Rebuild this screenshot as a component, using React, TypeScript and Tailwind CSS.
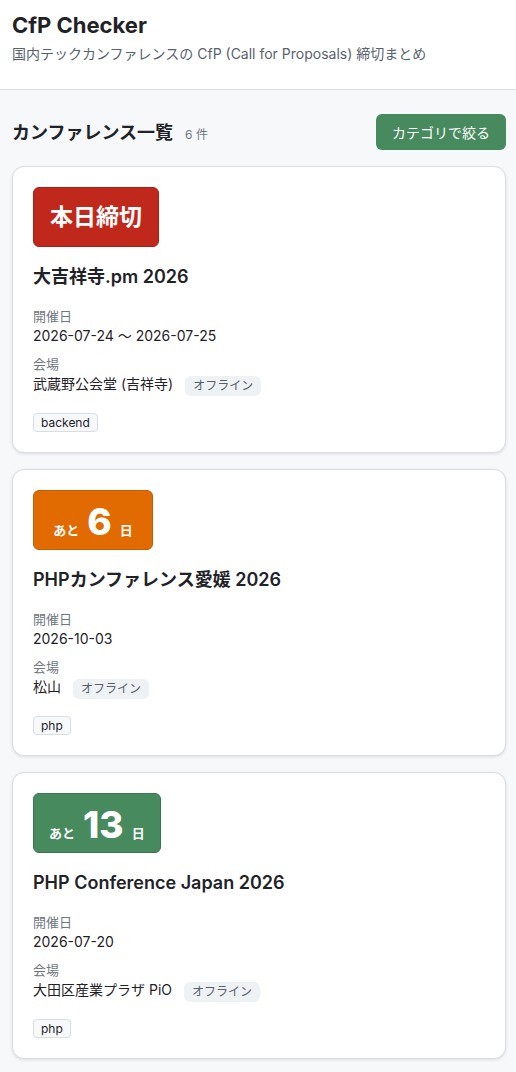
import React from 'react';

type Deadline =
  | { kind: 'today' }
  | { kind: 'days'; days: number; tone: 'orange' | 'green' };

interface Conference {
  id: string;
  name: string;
  date: string;
  venue: string;
  mode: string;
  tags: string[];
  deadline: Deadline;
}

const conferences: Conference[] = [
  {
    id: 'kichijoji',
    name: '大吉祥寺.pm 2026',
    date: '2026-07-24 〜 2026-07-25',
    venue: '武蔵野公会堂 (吉祥寺)',
    mode: 'オフライン',
    tags: ['backend'],
    deadline: { kind: 'today' },
  },
  {
    id: 'phpcon-ehime',
    name: 'PHPカンファレンス愛媛 2026',
    date: '2026-10-03',
    venue: '松山',
    mode: 'オフライン',
    tags: ['php'],
    deadline: { kind: 'days', days: 6, tone: 'orange' },
  },
  {
    id: 'phpcon-japan',
    name: 'PHP Conference Japan 2026',
    date: '2026-07-20',
    venue: '大田区産業プラザ PiO',
    mode: 'オフライン',
    tags: ['php'],
    deadline: { kind: 'days', days: 13, tone: 'green' },
  },
];

function DeadlineBadge({ deadline }: { deadline: Deadline }) {
  if (deadline.kind === 'today') {
    return (
      <div className="inline-flex h-[60px] min-w-[120px] items-center justify-center rounded-md border border-[#a52116] bg-[#c0281c] px-4 text-white">
        <span className="text-[23px] font-bold leading-none">本日締切</span>
      </div>
    );
  }

  const toneClass =
    deadline.tone === 'orange'
      ? 'bg-[#e16b00] border-[#c65e00]'
      : 'bg-[#468a5d] border-[#3a7450]';

  return (
    <div
      className={`inline-flex h-[60px] min-w-[120px] items-baseline justify-center gap-[8px] rounded-md border px-[15px] pt-[16px] text-white ${toneClass}`}
    >
      <span className="text-[13px] font-bold leading-none">あと</span>
      <span className="text-[37px] font-extrabold leading-[30px]">{deadline.days}</span>
      <span className="text-[13px] font-bold leading-none">日</span>
    </div>
  );
}

function ConferenceCard({ conf }: { conf: Conference }) {
  return (
    <div className="rounded-xl border border-[#d8dee4] bg-white p-5 shadow-[0_1px_3px_rgba(31,35,40,0.12)]">
      <DeadlineBadge deadline={conf.deadline} />

      <h3 className="mt-4 text-[18px] font-semibold leading-[28px] text-[#1f2328]">{conf.name}</h3>

      {/* Details */}
      <div className="mt-[15px]">
        <div className="text-[13px] leading-5 text-[#6e7781]">開催日</div>
        <div className="text-[14px] leading-5 text-[#1f2328]">{conf.date}</div>

        <div className="mt-2 text-[13px] leading-5 text-[#6e7781]">会場</div>
        <div className="flex h-5 items-center text-[14px] leading-5 text-[#1f2328]">
          <span>{conf.venue}</span>
          <span className="ml-3 mt-[3px] rounded-md bg-[#eff2f5] px-2 text-[12px] leading-[20px] text-[#57606a]">
            {conf.mode}
          </span>
        </div>
      </div>

      <div className="mt-[19px] flex gap-2">
        {conf.tags.map((tag) => (
          <span
            key={tag}
            className="rounded border border-[#d8dee4] bg-[#f6f8fa] px-[7px] text-[12px] leading-[17px] text-[#1f2328]"
          >
            {tag}
          </span>
        ))}
      </div>
    </div>
  );
}

export default function App() {
  return (
    <div className="min-h-screen bg-[#f6f8fa] font-['Inter','Noto_Sans_CJK_JP',sans-serif] text-[#1f2328]">
      <header className="border-b border-[#d8dee4] bg-white px-3 pb-[25px] pt-[11px]">
        <h1 className="text-[22px] font-bold leading-[28px] text-[#1f2328]">CfP Checker</h1>
        <p className="mt-[5px] text-[14px] leading-5 text-[#59636e]">
          国内テックカンファレンスの CfP (Call for Proposals) 締切まとめ
        </p>
      </header>

      <main className="pb-6 pl-3 pr-[10px] pt-6">
        <div className="mb-4 flex h-9 items-center justify-between">
          <div className="flex items-baseline">
            <h2 className="text-[18px] font-bold text-[#1f2328]">カンファレンス一覧</h2>
            <span className="ml-3 text-[12px] text-[#6e7781]">{6} 件</span>
          </div>
          <button className="h-9 rounded-md bg-[#468a5d] px-4 text-[14px] text-white">
            カテゴリで絞る
          </button>
        </div>

        <div className="space-y-4">
          {conferences.map((conf) => (
            <ConferenceCard key={conf.id} conf={conf} />
          ))}
        </div>
      </main>
    </div>
  );
}
